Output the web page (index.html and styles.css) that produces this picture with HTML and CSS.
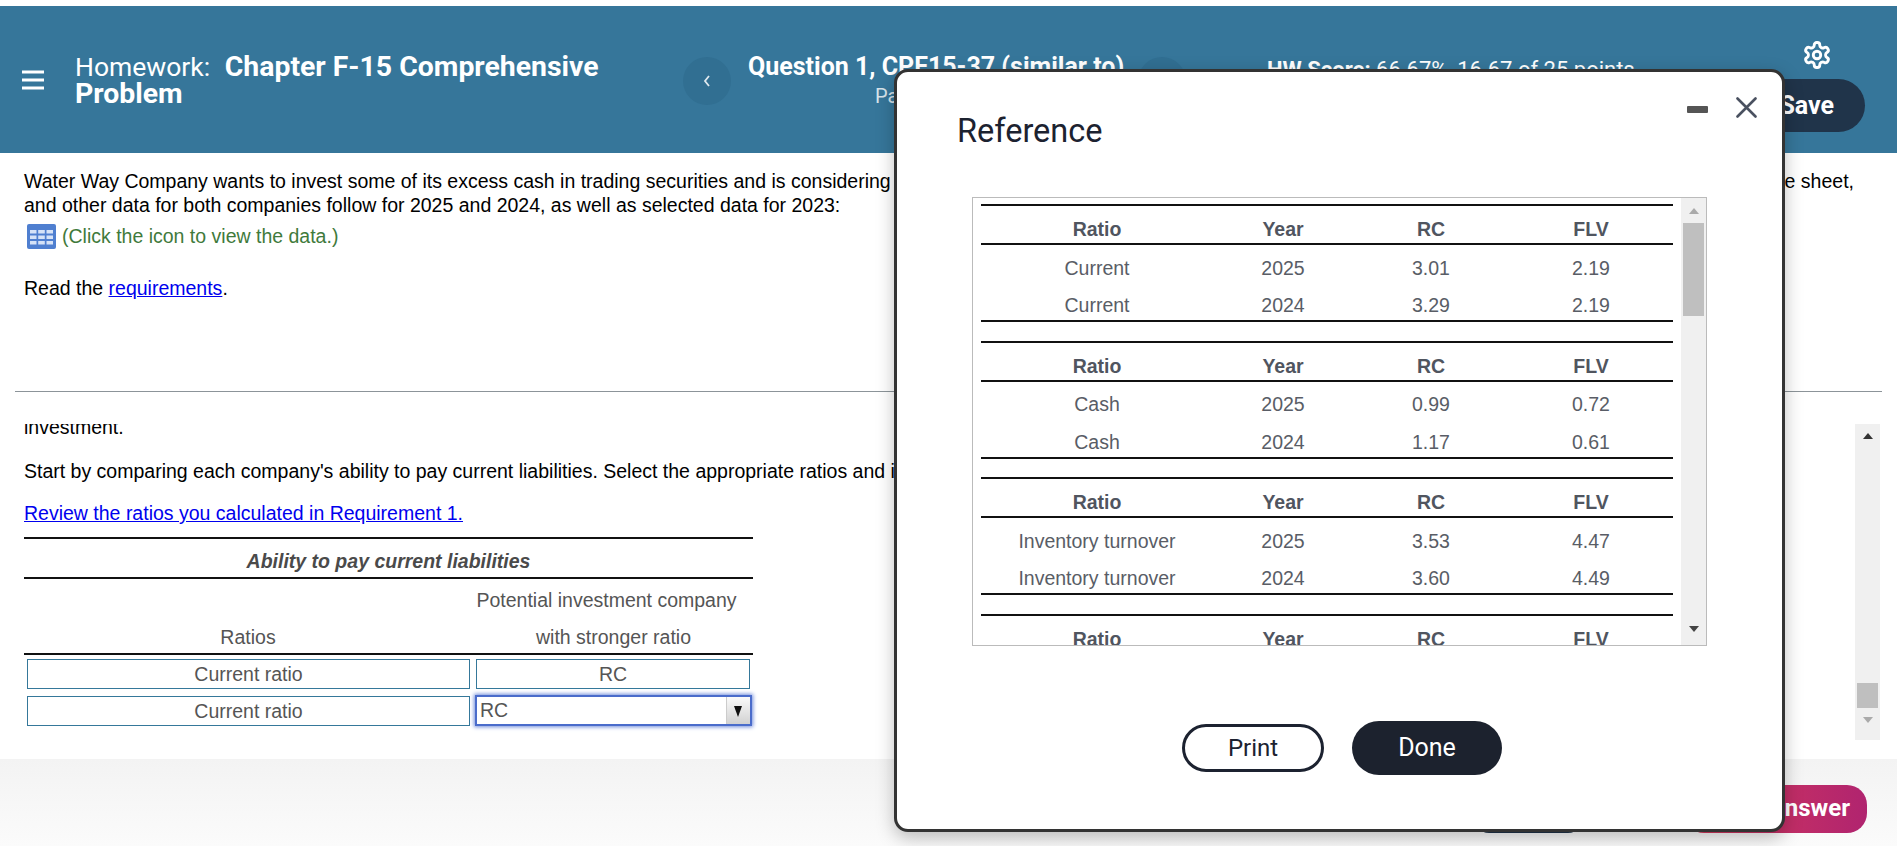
FILE: index.html
```html
<!DOCTYPE html>
<html lang="en">
<head>
<meta charset="utf-8">
<title>Homework: Chapter F-15 Comprehensive Problem</title>
<link rel="stylesheet" href="styles.css">
</head>
<body>
<div class="page">
  <header class="topbar">
    <div class="menu-cell">
      <svg class="menu-icon" viewBox="0 0 22 20" aria-hidden="true"><path d="M0 2h22M0 10h22M0 18h22"/></svg>
    </div>
    <h1 class="hw-title">Homework: <b>Chapter F-15 Comprehensive Problem</b></h1>
    <div class="nav-btn">
      <svg class="chev" viewBox="0 0 10 16" aria-hidden="true"><path d="M7 3 3 8l4 5"/></svg>
    </div>
    <div class="question">
      <div class="q-name">Question 1, CPF15-37 (similar to)</div>
      <div class="q-part">Part 5 of 7</div>
    </div>
    <div class="nav-btn"></div>
    <div class="score"><b>HW Score:</b> 66.67%, 16.67 of 25 points</div>
    <div class="actions">
      <svg class="gear" viewBox="0 0 24 24" aria-hidden="true"><path d="M12.22 2h-.44a2 2 0 0 0-2 2v.18a2 2 0 0 1-1 1.73l-.43.25a2 2 0 0 1-2 0l-.15-.08a2 2 0 0 0-2.73.73l-.22.38a2 2 0 0 0 .73 2.73l.15.1a2 2 0 0 1 1 1.72v.51a2 2 0 0 1-1 1.74l-.15.09a2 2 0 0 0-.73 2.73l.22.38a2 2 0 0 0 2.73.73l.15-.08a2 2 0 0 1 2 0l.43.25a2 2 0 0 1 1 1.73V20a2 2 0 0 0 2 2h.44a2 2 0 0 0 2-2v-.18a2 2 0 0 1 1-1.73l.43-.25a2 2 0 0 1 2 0l.15.08a2 2 0 0 0 2.73-.73l.22-.39a2 2 0 0 0-.73-2.73l-.15-.08a2 2 0 0 1-1-1.74v-.5a2 2 0 0 1 1-1.74l.15-.09a2 2 0 0 0 .73-2.73l-.22-.38a2 2 0 0 0-2.73-.73l-.15.08a2 2 0 0 1-2 0l-.43-.25a2 2 0 0 1-1-1.73V4a2 2 0 0 0-2-2z"/><circle cx="12" cy="12" r="3"/></svg>
      <div class="save-btn">Save</div>
    </div>
  </header>

  <section class="problem">
    <p class="prob-line split"><span>Water Way Company wants to invest some of its excess cash in trading securities and is considering</span><span>balance sheet,</span></p>
    <p class="prob-line">and other data for both companies follow for 2025 and 2024, as well as selected data for 2023:</p>
    <p class="data-line">
      <svg class="grid-icon" viewBox="0 0 29 25" aria-hidden="true">
        <rect width="29" height="25" rx="2"/>
        <path d="M3 6h6.5v3.500h-6.500zM11.200 6h6.600v3.500h-6.600zM19.500 6h6.500v3.500h-6.500zM3 11.500h6.500v3.500h-6.500zM11.200 11.500h6.600v3.500h-6.600zM19.500 11.500h6.500v3.500h-6.500zM3 17h6.500v3.500h-6.500zM11.200 17h6.600v3.500h-6.600zM19.500 17h6.500v3.500h-6.500z"/>
      </svg>
      <span>(Click the icon to view the data.)</span>
    </p>
    <p class="read-line">Read the <a href="#">requirements</a>.</p>
  </section>

  <section class="work">
    <div class="work-scroll">
      <p class="clip-line">investment.</p>
      <p class="start-line">Start by comparing each company's ability to pay current liabilities. Select the appropriate ratios and identify the company.</p>
      <p class="review-line"><a href="#">Review the ratios you calculated in Requirement 1.</a></p>
      <table class="answer">
        <colgroup><col class="a-col1"><col class="a-col2"></colgroup>
        <tr class="a-title"><th colspan="2">Ability to pay current liabilities</th></tr>
        <tr class="a-head"><td></td><td class="a-potential">Potential investment company</td></tr>
        <tr class="a-head a-head-last"><td class="a-ratios">Ratios</td><td class="a-stronger">with stronger ratio</td></tr>
        <tr class="a-row">
          <td><div class="cell-box cell-ratio">Current ratio</div></td>
          <td><div class="cell-box cell-company">RC</div></td>
        </tr>
        <tr class="a-row">
          <td><div class="cell-box cell-ratio">Current ratio</div></td>
          <td><div class="select-box"><span class="select-val">RC</span><span class="select-arrow"></span></div></td>
        </tr>
      </table>
    </div>
    <div class="page-scroll">
      <span class="arrow-up dark"></span>
      <span class="page-thumb"></span>
      <span class="arrow-down"></span>
    </div>
  </section>

  <footer class="footer">
    <div class="clear-btn">Clear all</div>
    <div class="check-btn">Check answer</div>
  </footer>
</div>

<div class="modal">
  <div class="modal-tools">
    <span class="minimize"></span>
    <svg class="close" viewBox="0 0 21 21" aria-hidden="true"><path d="M1.500 1.500l18 18M19.500 1.500l-18 18"/></svg>
  </div>
  <h2 class="modal-title">Reference</h2>
  <div class="ref-box">
    <div class="ref-scroll">
      <table class="ref">
        <colgroup><col class="r1"><col class="r2"><col class="r3"><col class="r4"></colgroup>
        <thead><tr><th>Ratio</th><th>Year</th><th>RC</th><th>FLV</th></tr></thead>
        <tbody>
          <tr><td>Current</td><td>2025</td><td>3.01</td><td>2.19</td></tr>
          <tr><td>Current</td><td>2024</td><td>3.29</td><td>2.19</td></tr>
        </tbody>
      </table>
      <table class="ref">
        <colgroup><col class="r1"><col class="r2"><col class="r3"><col class="r4"></colgroup>
        <thead><tr><th>Ratio</th><th>Year</th><th>RC</th><th>FLV</th></tr></thead>
        <tbody>
          <tr><td>Cash</td><td>2025</td><td>0.99</td><td>0.72</td></tr>
          <tr><td>Cash</td><td>2024</td><td>1.17</td><td>0.61</td></tr>
        </tbody>
      </table>
      <table class="ref">
        <colgroup><col class="r1"><col class="r2"><col class="r3"><col class="r4"></colgroup>
        <thead><tr><th>Ratio</th><th>Year</th><th>RC</th><th>FLV</th></tr></thead>
        <tbody>
          <tr><td>Inventory turnover</td><td>2025</td><td>3.53</td><td>4.47</td></tr>
          <tr><td>Inventory turnover</td><td>2024</td><td>3.60</td><td>4.49</td></tr>
        </tbody>
      </table>
      <table class="ref">
        <colgroup><col class="r1"><col class="r2"><col class="r3"><col class="r4"></colgroup>
        <thead><tr><th>Ratio</th><th>Year</th><th>RC</th><th>FLV</th></tr></thead>
      </table>
    </div>
    <div class="ref-bar">
      <span class="arrow-up"></span>
      <span class="ref-thumb"></span>
      <span class="arrow-down dark"></span>
    </div>
  </div>
  <div class="modal-actions">
    <div class="print-btn">Print</div>
    <div class="done-btn">Done</div>
  </div>
</div>
</body>
</html>
```
FILE: styles.css
```css
* { box-sizing: border-box; }
html, body { margin: 0; height: 846px; overflow: hidden; }
body { font-family: "Liberation Sans", Arial, sans-serif; font-size: 19.5px; color: #000; background: #fff; position: relative; }
p { margin: 0; }
a { color: #0000ee; text-decoration: underline; }

.page { height: 846px; padding-top: 6px; display: flex; flex-direction: column; }

/* top bar */
.topbar { height: 147px; flex: none; background: #36769a; color: #fff; display: flex; align-items: flex-start; padding-top: 34px; font-family: Roboto, "Liberation Sans", sans-serif; }
.menu-cell { width: 75px; padding-left: 22px; margin-top: 30px; flex: none; }
.menu-icon { display: block; width: 22px; height: 20px; fill: none; stroke: #fff; stroke-width: 3; }
.hw-title { width: 608px; flex: none; margin: 13px 0 0; font-size: 26.5px; line-height: 27px; font-weight: 400; padding-right: 60px; }
.hw-title b { font-size: 28.400px; font-weight: 700; margin-left: 8px; }
.nav-btn { width: 48px; height: 48px; border-radius: 50%; background: #316f92; flex: none; margin-top: 17px; display: flex; align-items: center; justify-content: center; }
.chev { width: 10px; height: 16px; fill: none; stroke: #dfe9ef; stroke-width: 1.800; }
.question { width: 390px; margin: 12px 0 0 17px; flex: none; }
.q-name { font-size: 25px; font-weight: 700; line-height: 30px; white-space: nowrap; }
.q-part { font-size: 20px; line-height: 28px; color: #d7e3ea; padding-left: 127px; }
.score { margin: 18px 0 0 81px; font-size: 22px; line-height: 24px; white-space: nowrap; flex: none; }
.score b { font-weight: 700; }
.actions { margin-left: auto; padding-right: 32px; width: 162px; flex: none; display: flex; flex-direction: column; align-items: flex-end; }
.gear { width: 30px; height: 30px; margin-right: 33px; fill: none; stroke: #fff; stroke-width: 2.300; stroke-linecap: round; stroke-linejoin: round; }
.save-btn { width: 130px; height: 53px; margin-top: 9px; border-radius: 27px; background: #20344a; text-align: right; padding-right: 31px; font-size: 25px; font-weight: 700; line-height: 53px; }

/* problem statement */
.problem { height: 239px; flex: none; margin: 0 15px; padding: 16px 9px 0; border-bottom: 1px solid #8c9499; }
.prob-line { line-height: 24px; white-space: nowrap; }
.split { display: flex; justify-content: space-between; padding-right: 19px; }
.data-line { display: flex; align-items: center; margin: 7px 0 0 3px; height: 25px; color: #3f7a3c; }
.grid-icon { width: 29px; height: 25px; margin-right: 6px; flex: none; }
.grid-icon rect { fill: #4f7fd0; }
.grid-icon path { fill: #d5e2f7; }
.read-line { margin-top: 27px; line-height: 24px; }

/* work area */
.work { height: 367px; flex: none; padding-top: 32px; display: flex; align-items: flex-start; }
.work-scroll { width: 1855px; height: 335px; overflow: hidden; padding-left: 24px; flex: none; }
.clip-line { margin-top: -9px; line-height: 24px; }
.start-line { margin-top: 20px; line-height: 24px; white-space: nowrap; }
.review-line { margin-top: 18px; line-height: 24px; }

.answer { margin-top: 12px; width: 729px; table-layout: fixed; border-collapse: collapse; color: #555; }
.a-col1 { width: 452px; }
.a-col2 { width: 277px; }
.a-title th { height: 40px; padding: 6px 0 0; border-top: 2px solid #111; border-bottom: 2px solid #111; font-style: italic; font-weight: 700; color: #4a4a4a; text-align: center; }
.a-head td { height: 38px; text-align: center; padding: 5px 0 0; }
.a-head td.a-potential { padding-right: 16px; }
.a-head td.a-ratios { padding-right: 4px; }
.a-head td.a-stronger { padding-right: 2px; }
.a-head-last td { border-bottom: 2px solid #111; }
.a-row td { height: 37px; padding: 2px 0 0; }
.cell-box { height: 30px; border: 1px solid #35789a; text-align: center; line-height: 28px; }
.cell-ratio { margin-left: 3px; margin-right: 6px; }
.cell-company { margin-right: 3px; }
.select-box { height: 31px; margin: 0 1px 0 -1px; border: 2px solid #4a6ccb; box-shadow: 0 0 4px 1px #6f8bdb; display: flex; justify-content: space-between; background: #fff; }
.select-val { line-height: 27px; padding-left: 3px; }
.select-arrow { width: 24px; background: linear-gradient(#fafafa, #d2d2d2); border-left: 1px solid #ccc; position: relative; }
.select-arrow::after { content: ""; position: absolute; left: 7px; top: 9px; border-left: 4px solid transparent; border-right: 4px solid transparent; border-top: 11px solid #111; }

.page-scroll { width: 25px; height: 316px; background: #f0f0f0; flex: none; display: flex; flex-direction: column; align-items: center; }
.page-thumb { width: 21px; height: 25px; margin-top: 244px; background: #bfbfbf; }
.arrow-up, .arrow-down { width: 0; height: 0; border-left: 5px solid transparent; border-right: 5px solid transparent; }
.arrow-up { border-bottom: 6px solid #aaa; }
.arrow-down { border-top: 6px solid #aaa; }
.arrow-up.dark { border-bottom-color: #333; }
.arrow-down.dark { border-top-color: #444; }
.page-scroll .arrow-up { margin-top: 9px; }
.page-scroll .arrow-down { margin-top: 9px; }

/* footer */
.footer { flex: 1; background: linear-gradient(#f3f3f3, #fbfbfb); padding: 26px 30px 0 0; display: flex; justify-content: flex-end; align-items: flex-start; font-family: Roboto, "Liberation Sans", sans-serif; font-weight: 700; font-size: 24px; color: #fff; }
.clear-btn { width: 111px; height: 48px; margin-right: 100px; border-radius: 16px; background: #20344a; line-height: 48px; text-align: center; white-space: nowrap; }
.check-btn { width: 183px; height: 48px; border-radius: 20px; background: linear-gradient(90deg, #d93a5b, #b0246f); line-height: 46px; text-align: right; padding-right: 17px; white-space: nowrap; }

/* modal */
.modal { position: absolute; left: 894px; top: 69px; width: 891px; height: 763px; border: 3px solid #333; border-radius: 14px; background: #fff; box-shadow: 0 6px 18px rgba(0,0,0,.25); padding: 39px 0 0 60px; font-family: Roboto, "Liberation Sans", sans-serif; }
.modal-tools { position: absolute; top: 25px; right: 25px; display: flex; align-items: center; gap: 28px; }
.minimize { width: 21px; height: 7px; margin-top: 3px; border-radius: 1px; background: #555; }
.close { width: 21px; height: 21px; fill: none; stroke: #4a5160; stroke-width: 2.600; stroke-linecap: round; }
.modal-title { margin: 0; font-size: 32.5px; line-height: 40px; font-weight: 400; color: #1c2230; }
.ref-box { width: 735px; height: 449px; margin: 46px 0 0 15px; border: 1px solid #bbb; display: flex; justify-content: space-between; }
.ref-scroll { width: 700px; padding: 6px 0 0 8px; overflow: hidden; }
.ref { width: 692px; table-layout: fixed; border-collapse: collapse; margin-bottom: 18.500px; font-family: "Liberation Sans", Arial, sans-serif; font-size: 19.5px; color: #595d66; border-top: 2px solid #111; border-bottom: 2px solid #111; text-align: center; }
.r1 { width: 232px; }
.r2 { width: 140px; }
.r3 { width: 156px; }
.r4 { width: 164px; }
.ref th { height: 39px; padding: 10px 0 0; font-weight: 700; color: #50555f; border-bottom: 2px solid #111; }
.ref td { height: 38px; padding: 8px 0 0; }
.ref tr:first-child td { height: 39px; padding-top: 8px; }
.ref-bar { width: 25px; background: #f0f0f0; display: flex; flex-direction: column; align-items: center; padding-top: 10px; }
.ref-thumb { width: 21px; height: 93px; margin-top: 9px; background: #bfbfbf; }
.ref-bar .arrow-down { margin-top: 310px; }
.modal-actions { display: flex; justify-content: center; align-items: center; gap: 28px; margin-top: 75px; padding-right: 55px; font-size: 24px; }
.print-btn { width: 142px; height: 48px; border: 3px solid #1c2230; border-radius: 24px; background: #fff; color: #1c2230; text-align: center; line-height: 42px; }
.done-btn { width: 150px; height: 54px; border-radius: 27px; background: #1c222e; color: #fff; text-align: center; line-height: 54px; font-size: 25px; }
```
